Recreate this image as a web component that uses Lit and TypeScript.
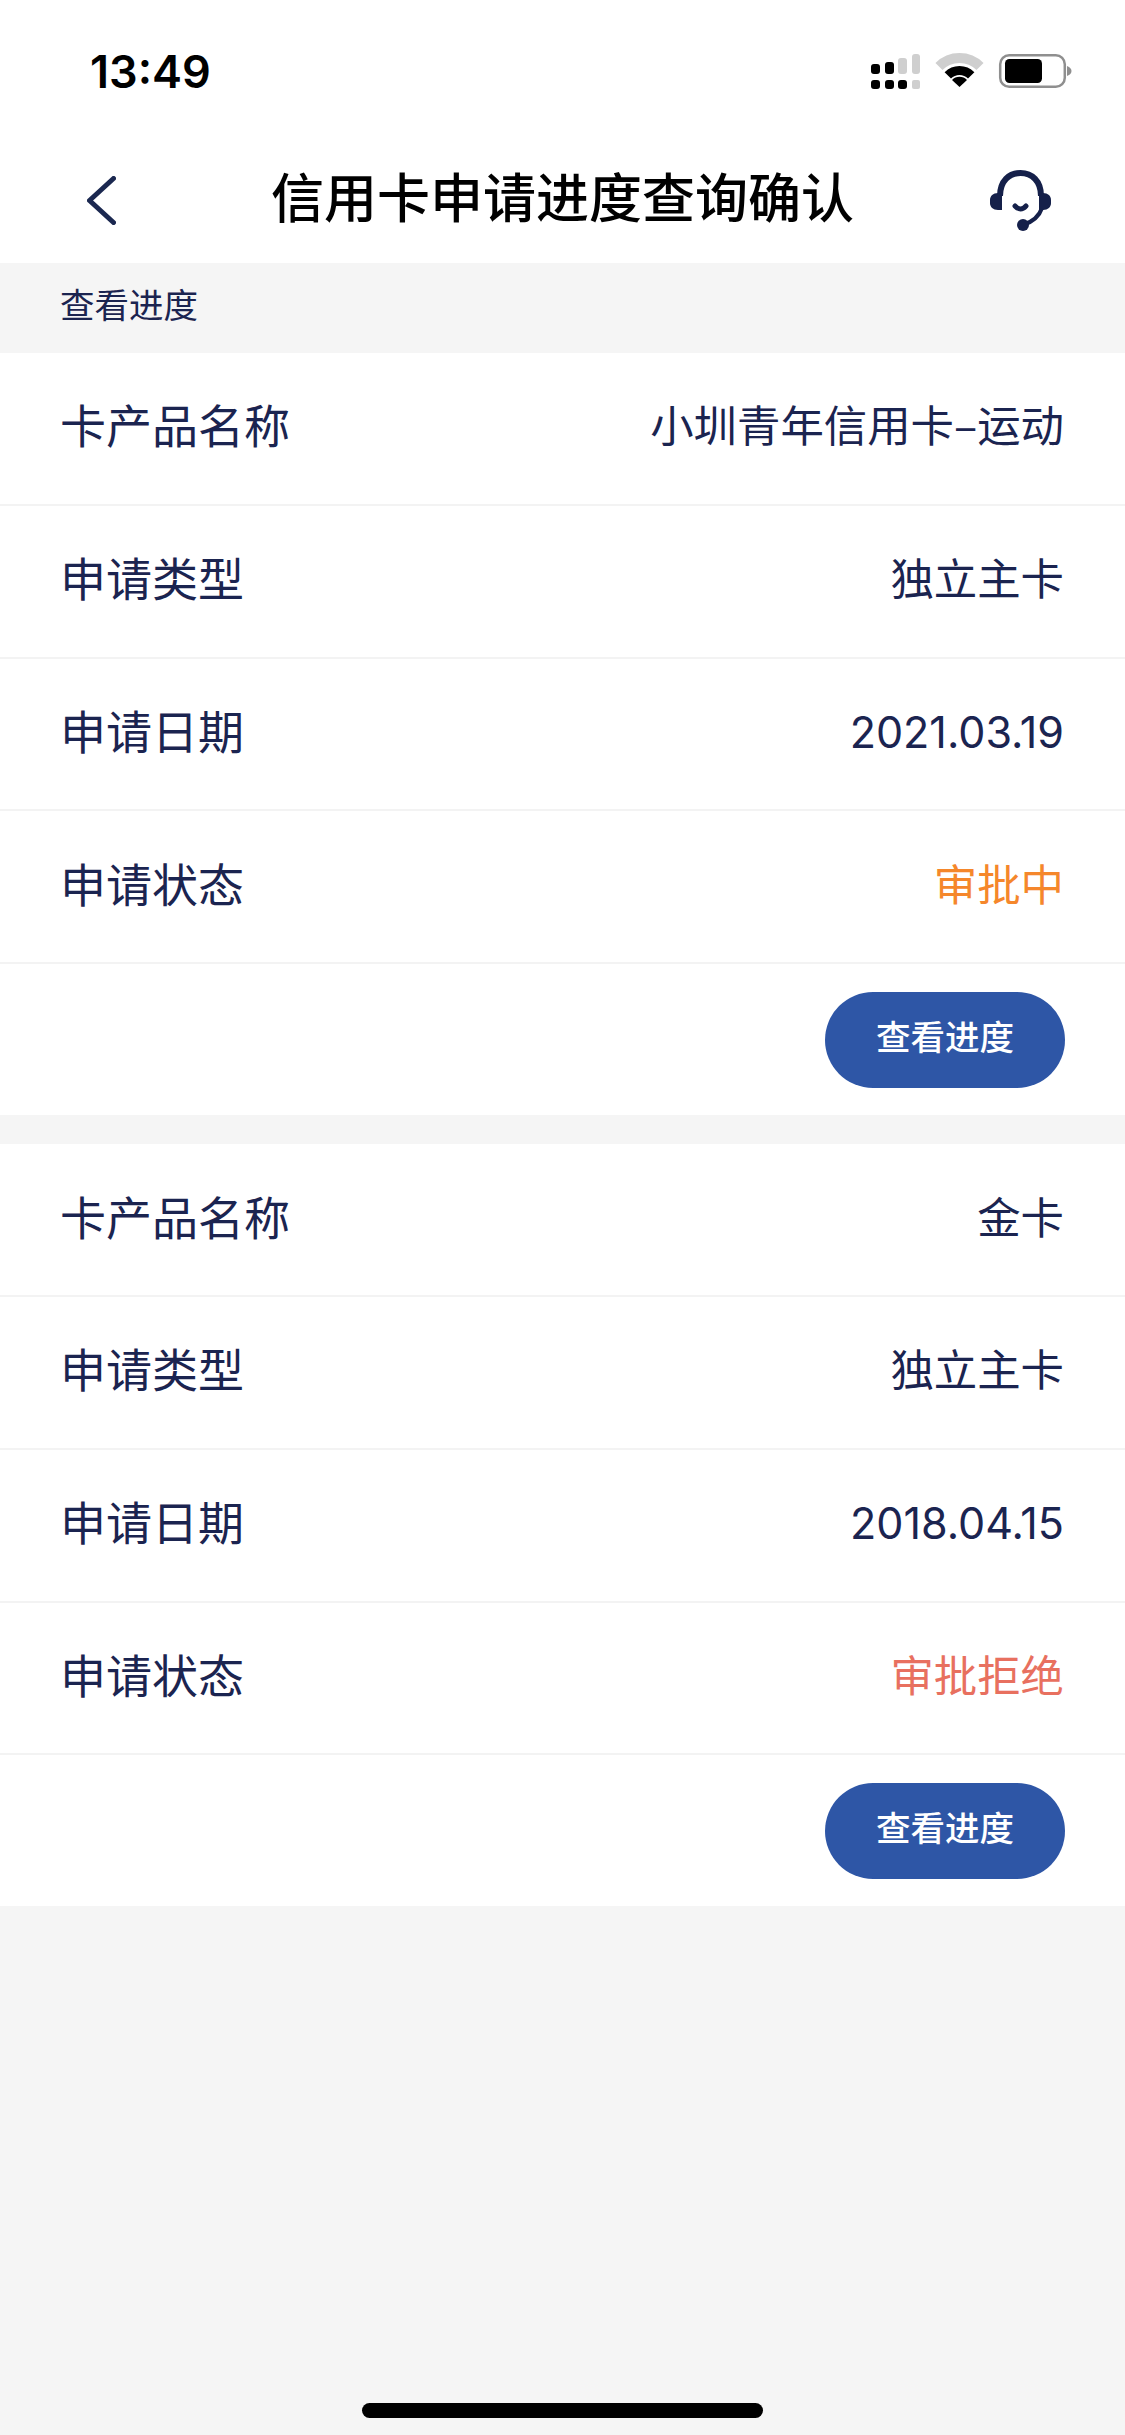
import { LitElement, css, html } from 'lit'
import { customElement } from 'lit/decorators.js'

const cards = [
    { name: '小圳青年信用卡–运动', date: '2021.03.19', status: '审批中', statusClass: 'pending' },
    { name: '金卡', date: '2018.04.15', status: '审批拒绝', statusClass: 'rejected' }
]

@customElement('app-root')
export class AppRoot extends LitElement {
    static styles = css`
        :host {
            display: block;
            font-family: "Noto Sans CJK SC", sans-serif;
            color: #1b2450;
        }

        .page {
            display: flex;
            flex-direction: column;
            min-height: 2435px;
            background: #f5f5f5;
        }

        .status-bar {
            display: flex;
            justify-content: space-between;
            align-items: flex-start;
            height: 132px;
            padding: 46px 52px 0 90px;
            box-sizing: border-box;
            background: #fff;
        }

        .time {
            font-family: Inter, sans-serif;
            font-size: 45px;
            font-weight: 600;
            line-height: 52px;
            color: #000;
        }

        .status-icons {
            display: block;
            margin-top: 6px;
        }

        .nav {
            display: flex;
            align-items: center;
            justify-content: space-between;
            height: 131px;
            padding: 0 73px 0 87px;
            box-sizing: border-box;
            background: #fff;
        }

        .nav svg {
            display: block;
            flex: none;
            margin-top: 6px;
        }

        .title {
            font-size: 53px;
            font-weight: 500;
            line-height: 70px;
            color: #000;
            margin: -6px 0 0 19px;
        }

        .section-label {
            height: 90px;
            padding-left: 60px;
            font-size: 34.5px;
            line-height: 80px;
            box-sizing: border-box;
        }

        .card {
            background: #fff;
            margin-bottom: 29px;
        }

        .row {
            display: flex;
            justify-content: space-between;
            align-items: center;
            height: 152.8px;
            padding: 0 61px 0 60px;
            box-sizing: border-box;
            border-bottom: 2px solid #f3f3f3;
            font-size: 46px;
        }

        .label,
        .value {
            margin-top: -10px;
        }

        .value {
            font-size: 43.4px;
        }

        .row .num {
            font-family: Inter, sans-serif;
            font-size: 43.1px;
            margin-top: -4px;
        }

        .pending {
            color: #f5872b;
        }

        .rejected {
            color: #e8705f;
        }

        .actions {
            display: flex;
            justify-content: flex-end;
            padding: 28px 60px 27px 0;
        }

        .btn {
            display: flex;
            align-items: center;
            justify-content: center;
            width: 240px;
            height: 96px;
            border: none;
            border-radius: 48px;
            background: #2e56a6;
            color: #fff;
            font-family: inherit;
            font-size: 34.5px;
            font-weight: 500;
            padding: 0 0 10px;
        }

        .home-indicator {
            flex: none;
            width: 401px;
            height: 15px;
            margin: auto auto 17px;
            border-radius: 8px;
            background: #000;
        }
    `

    renderRow(label: string, value: unknown, cls = '') {
        return html`
            <div class="row">
                <span class="label">${label}</span>
                <span class="value ${cls}">${value}</span>
            </div>
        `
    }

    renderCard(card: typeof cards[number]) {
        return html`
            <section class="card">
                ${this.renderRow('卡产品名称', card.name)}
                ${this.renderRow('申请类型', '独立主卡')}
                ${this.renderRow('申请日期', card.date, 'num')}
                ${this.renderRow('申请状态', card.status, card.statusClass)}
                <div class="actions">
                    <button class="btn">查看进度</button>
                </div>
            </section>
        `
    }

    render() {
        return html`
            <div class="page">
                <div class="status-bar">
                    <span class="time">13:49</span>
                    <svg class="status-icons" width="202" height="38" viewBox="0 0 202 38">
                        <g fill="#000">
                            <rect x="0" y="12" width="9" height="10" rx="3" />
                            <rect x="14" y="10" width="9" height="12" rx="3" />
                            <rect x="0" y="28" width="9" height="9" rx="3" />
                            <rect x="14" y="28" width="9" height="9" rx="3" />
                            <rect x="27" y="28" width="9" height="9" rx="3" />
                        </g>
                        <g fill="#cfcfcf">
                            <rect x="27" y="6" width="9" height="16" rx="3" />
                            <rect x="41" y="2" width="8" height="20" rx="3" />
                            <rect x="41" y="28" width="8" height="9" rx="2" />
                        </g>
                        <path d="M68 14.5A29 29 0 0 1 109 14.5" fill="none" stroke="#cfcfcf" stroke-width="10" />
                        <path d="M76.8 23.3A16.5 16.5 0 0 1 100.2 23.3" fill="none" stroke="#000" stroke-width="9" />
                        <path d="M88.5 35L81 28A10.5 10.5 0 0 1 96 28Z" fill="#000" />
                        <rect x="129.2" y="3.2" width="64.6" height="31.6" rx="9" fill="none" stroke="#8f8f8f" stroke-width="2.5" />
                        <rect x="134" y="7" width="37" height="24" rx="4.5" fill="#000" />
                        <path d="M196 14C199 15 200.500 17 200.500 19C200.500 21 199 23 196 24Z" fill="#8f8f8f" />
                    </svg>
                </div>

                <div class="nav">
                    <svg width="29" height="49" viewBox="0 0 29 49">
                        <path d="M26.500 2.500L2.500 24.500L26.500 46.500" fill="none" stroke="#1b2850" stroke-width="5" stroke-linecap="round" stroke-linejoin="round" />
                    </svg>
                    <span class="title">信用卡申请进度查询确认</span>
                    <svg width="62" height="61" viewBox="0 0 62 61">
                        <path d="M10 26C10 11 19 3 30.500 3C42 3 51 11 51 26" fill="none" stroke="#15204a" stroke-width="6" />
                        <path d="M52 38C49 47 42 52 33 55" fill="none" stroke="#15204a" stroke-width="4" stroke-linecap="round" />
                        <path d="M12 23H8C3 23 0 26 0 30V33C0 37 3 40 8 40H12Z" fill="#15204a" />
                        <path d="M49 23H53C58 23 61 26 61 30V33C61 37 58 40 53 40H49Z" fill="#15204a" />
                        <circle cx="33" cy="55" r="6" fill="#15204a" />
                        <path d="M25 36Q30.500 42 36 36" fill="none" stroke="#15204a" stroke-width="5" stroke-linecap="round" />
                    </svg>
                </div>

                <div class="section-label">查看进度</div>

                ${cards.map(card => this.renderCard(card))}

                <div class="home-indicator"></div>
            </div>
        `
    }
}
